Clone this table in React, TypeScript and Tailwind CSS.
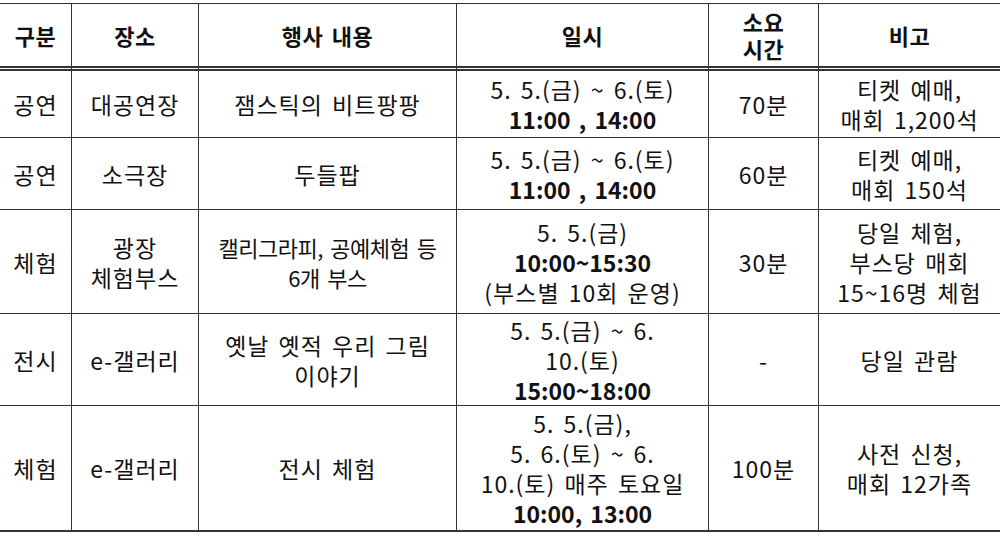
type Line = { t: string; b?: boolean }

interface Row {
  cat: string
  place: string[]
  content: string[]
  date: Line[]
  dur: string
  note: string[]
  tight?: boolean
}

const rows: Row[] = [
  {
    cat: '공연',
    place: ['대공연장'],
    content: ['잼스틱의 비트팡팡'],
    date: [{ t: '5. 5.(금) ~ 6.(토)' }, { t: '11:00 , 14:00', b: true }],
    dur: '70분',
    note: ['티켓 예매,', '매회 1,200석'],
  },
  {
    cat: '공연',
    place: ['소극장'],
    content: ['두들팝'],
    date: [{ t: '5. 5.(금) ~ 6.(토)' }, { t: '11:00 , 14:00', b: true }],
    dur: '60분',
    note: ['티켓 예매,', '매회 150석'],
  },
  {
    cat: '체험',
    place: ['광장', '체험부스'],
    content: ['캘리그라피, 공예체험 등', '6개 부스'],
    date: [{ t: '5. 5.(금)' }, { t: '10:00~15:30', b: true }, { t: '(부스별 10회 운영)' }],
    dur: '30분',
    note: ['당일 체험,', '부스당 매회', '15~16명 체험'],
    tight: true,
  },
  {
    cat: '전시',
    place: ['e-갤러리'],
    content: ['옛날 옛적 우리 그림', '이야기'],
    date: [{ t: '5. 5.(금) ~ 6.' }, { t: '10.(토)' }, { t: '15:00~18:00', b: true }],
    dur: '-',
    note: ['당일 관람'],
  },
  {
    cat: '체험',
    place: ['e-갤러리'],
    content: ['전시 체험'],
    date: [
      { t: '5. 5.(금),' },
      { t: '5. 6.(토) ~ 6.' },
      { t: '10.(토) 매주 토요일' },
      { t: '10:00, 13:00', b: true },
    ],
    dur: '100분',
    note: ['사전 신청,', '매회 12가족'],
  },
]

const cell = 'flex flex-col items-center justify-center text-center border-b border-[#333]'
const rowHeights = ['h-[67px]', 'h-[72px]', 'h-[104px]', 'h-[92px]', 'h-[126px]']

function Cell({ lines, last, extra = '' }: { lines: Line[]; last?: boolean; extra?: string }) {
  return (
    <div className={`${cell} ${last ? '' : 'border-r'} ${extra}`}>
      {lines.map((l, i) => (
        <div key={i} className={l.b ? 'font-bold tracking-[0px]' : ''}>
          {l.t}
        </div>
      ))}
    </div>
  )
}

const plain = (arr: string[]) => arr.map((t) => ({ t }))

export default function App() {
  return (
    <div
      className="w-[1000px] h-[536px] bg-white pt-[3px] text-[#111] text-[23px] leading-[30px] tracking-[1px] [word-spacing:3px]"
      style={{ fontFamily: '"Noto Sans CJK KR", "Noto Sans", sans-serif' }}
    >
      <div className="grid grid-cols-[72px_127px_258px_252px_110px_181px] border-t border-[#333]">
        {/* Header */}
        {['구분', '장소', '행사 내용', '일시', '소요\n시간', '비고'].map((h, i) => (
          <div
            key={h}
            className={`h-[67px] flex flex-col items-center justify-center text-center font-bold text-[22px] leading-[27px] tracking-[0.5px] border-b-[5px] border-double border-[#333] ${i < 5 ? 'border-r' : ''}`}
          >
            {h.split('\n').map((s) => (
              <div key={s}>{s}</div>
            ))}
          </div>
        ))}

        {/* Body */}
        {rows.map((r, ri) => {
          const h = rowHeights[ri]
          const lastRow = ri === rows.length - 1 ? 'border-b-2' : ''
          return [
            <Cell key={`${ri}a`} lines={[{ t: r.cat }]} extra={`${h} ${lastRow}`} />,
            <Cell key={`${ri}b`} lines={plain(r.place)} extra={`${h} ${lastRow}`} />,
            <Cell
              key={`${ri}c`}
              lines={plain(r.content)}
              extra={`${h} ${lastRow} ${r.tight ? 'text-[22px] tracking-[-0.5px] [word-spacing:3px]' : ''}`}
            />,
            <Cell key={`${ri}d`} lines={r.date} extra={`${h} ${lastRow}`} />,
            <Cell key={`${ri}e`} lines={[{ t: r.dur }]} extra={`${h} ${lastRow}`} />,
            <Cell key={`${ri}f`} lines={plain(r.note)} last extra={`${h} ${lastRow}`} />,
          ]
        })}
      </div>
    </div>
  )
}
